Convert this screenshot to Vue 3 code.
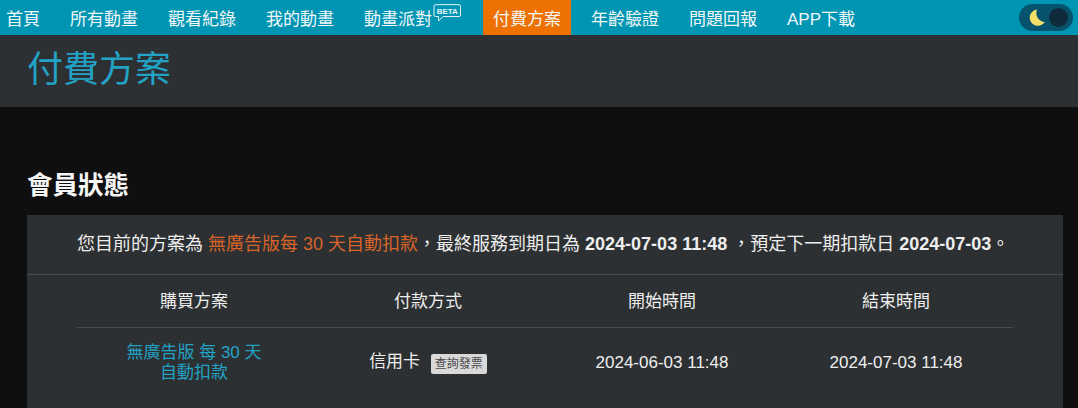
<script setup>
const navItems = [
  { label: '首頁' },
  { label: '所有動畫' },
  { label: '觀看紀錄' },
  { label: '我的動畫' },
  { label: '動畫派對', beta: true },
  { label: '付費方案', active: true },
  { label: '年齡驗證' },
  { label: '問題回報' },
  { label: 'APP下載' },
]
const columns = ['購買方案', '付款方式', '開始時間', '結束時間']
</script>

<template>
  <div class="page">
    <nav class="topbar">
      <a v-for="item in navItems" :key="item.label" class="nav_item" :class="{ active: item.active }">
        {{ item.label }}
        <svg v-if="item.beta" class="beta" viewBox="0 0 28 18" width="28" height="18">
          <path d="M2.5 .7H26a1.5 1.5 0 0 1 1.5 1.5V11a1.5 1.5 0 0 1-1.5 1.5H10L5.5 17V12.500H2.500A1.500 1.500 0 0 1 1 11V2.200A1.500 1.500 0 0 1 2.500 .7Z" fill="none" stroke="#e6f4f8" stroke-width="1" />
          <text x="14.300" y="9.800" text-anchor="middle" fill="#e6f4f8" font-size="8" font-weight="700" font-family="Liberation Sans">BETA</text>
        </svg>
      </a>
      <div class="toggle">
        <svg class="moon" viewBox="0 0 16 16" width="17" height="17">
          <path d="M8.500 .5A7.700 7.700 0 1 0 15.800 12.300A8.500 8.500 0 0 1 8.500 .5Z" fill="#f5e06a" />
        </svg>
        <span class="knob"></span>
      </div>
    </nav>

    <header class="page_title">
      <h1>付費方案</h1>
    </header>

    <main class="content">
      <h2>會員狀態</h2>
      <section class="card">
        <p class="status">
          您目前的方案為 <span class="plan">無廣告版每 30 天自動扣款</span>，最終服務到期日為 <b>2024-07-03 11:48</b> ，預定下一期扣款日 <b>2024-07-03</b>。
        </p>
        <div class="table_wrap">
          <table>
            <thead>
              <tr>
                <th v-for="col in columns" :key="col">{{ col }}</th>
              </tr>
            </thead>
            <tbody>
              <tr>
                <td class="plan_name">無廣告版 每 30 天<br>自動扣款</td>
                <td>信用卡 <span class="invoice">查詢發票</span></td>
                <td>2024-06-03 11:48</td>
                <td>2024-07-03 11:48</td>
              </tr>
            </tbody>
          </table>
        </div>
      </section>
    </main>
  </div>
</template>

<style>
html, body {
  margin: 0;
  background: #0f0f0f;
  overflow: hidden;
}
</style>

<style scoped>
.page {
  width: 1078px;
  height: 408px;
  overflow: hidden;
  background: #0f0f0f;
  font-family: "Liberation Sans", "Noto Sans CJK TC", sans-serif;
  color: #eeeeee;
}

.topbar {
  display: flex;
  align-items: stretch;
  gap: 10px;
  height: 35px;
  background: #0095b3;
}
.nav_item {
  display: flex;
  align-items: center;
  padding: 0 10px;
  font-size: 17px;
  color: #f2f7f8;
  white-space: nowrap;
}
.nav_item:first-child {
  padding-left: 6px;
}
.nav_item.active {
  background: #ed7203;
}
.beta {
  margin: -9px 2px 0 1px;
}
.toggle {
  display: flex;
  align-items: center;
  justify-content: space-between;
  box-sizing: border-box;
  width: 54px;
  height: 27px;
  margin: 4px 5px 0 auto;
  padding: 0 5px 0 9px;
  border-radius: 14px;
  background: #07536d;
}
.moon {
  flex: none;
}
.knob {
  width: 19px;
  height: 19px;
  border-radius: 50%;
  background: #0f2a3a;
}

.page_title {
  height: 72px;
  padding-left: 27px;
  background: #2d3032;
}
h1 {
  margin: 0;
  font-size: 36px;
  font-weight: 400;
  line-height: 70px;
  color: #22a2c4;
}

.content {
  padding: 63px 15px 0 27px;
}
h2 {
  margin: 0;
  font-size: 25.5px;
  line-height: 30px;
  font-weight: 700;
  color: #f5f5f5;
}
.card {
  margin-top: 15px;
  padding-bottom: 30px;
  background: #2d3032;
}
.status {
  margin: 0;
  height: 60px;
  line-height: 58px;
  padding-left: 50px;
  font-size: 18px;
  white-space: nowrap;
  border-bottom: 1px solid #494c4e;
  box-sizing: border-box;
}
.status b {
  font-weight: 700;
}
.plan {
  color: #d8642a;
}
.table_wrap {
  padding: 0 50px;
}
table {
  width: 100%;
  border-collapse: collapse;
  table-layout: fixed;
}
th {
  height: 48px;
  padding: 0 0 4px;
  font-size: 17px;
  font-weight: 400;
  text-align: center;
  border-bottom: 1px solid #494c4e;
}
td {
  height: 70px;
  padding: 0;
  font-size: 17px;
  line-height: 20px;
  text-align: center;
}
.plan_name {
  color: #22a2c4;
}
.invoice {
  display: inline-block;
  margin-left: 6px;
  padding: 0 4px;
  background: #d9d9d9;
  color: #4a4a4a;
  font-size: 12px;
  line-height: 20px;
  border-radius: 2px;
  vertical-align: -1px;
}
</style>
